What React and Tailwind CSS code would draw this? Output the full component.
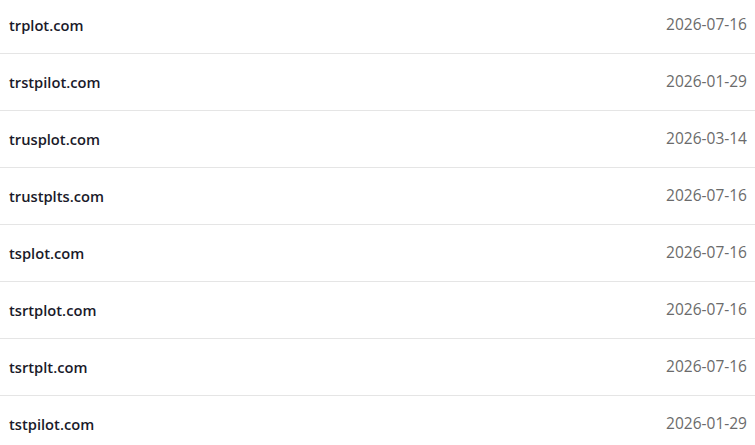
import React from "react";

const rows = [
  ["trplot.com", "2026-07-16"],
  ["trstpilot.com", "2026-01-29"],
  ["trusplot.com", "2026-03-14"],
  ["trustplts.com", "2026-07-16"],
  ["tsplot.com", "2026-07-16"],
  ["tsrtplot.com", "2026-07-16"],
  ["tsrtplt.com", "2026-07-16"],
  ["tstpilot.com", "2026-01-29"],
];

const App = () => {
  return (
    <div className="w-[755px] h-[445px] overflow-hidden bg-white" style={{ fontFamily: '"Open Sans", "Noto Sans", sans-serif' }}>
      <ul className="-mt-[3px]">
        {rows.map(([domain, date], index) => (
          <li key={index} className="flex items-center justify-between h-[57px] pl-[9px] pr-[8px] border-b border-[#e5e5e5]">
            <span className="text-[14.7px] font-semibold text-[#1a1a2a]">{domain}</span>
            <span className="text-[15.5px] text-[#6b6b6b]">{date}</span>
          </li>
        ))}
      </ul>
    </div>
  );
};

export default App;
